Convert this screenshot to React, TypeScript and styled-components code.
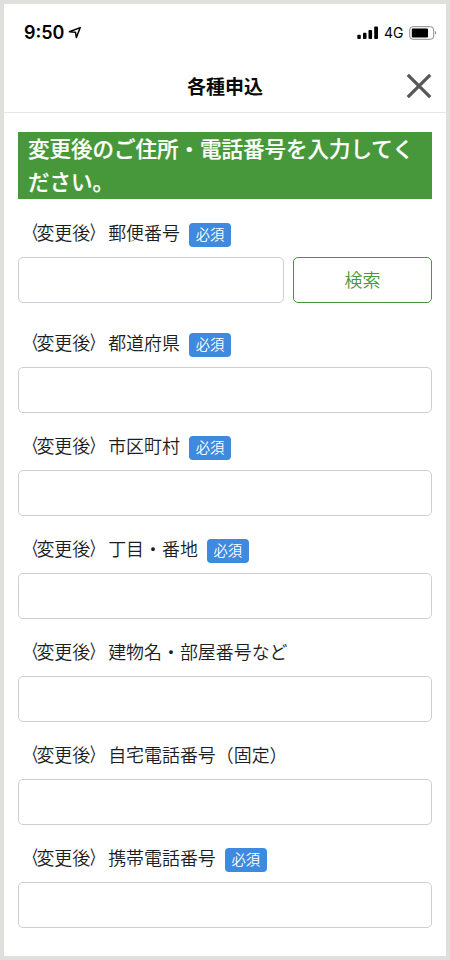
import React from "react";
import styled, { createGlobalStyle } from "styled-components";

const GlobalStyle = createGlobalStyle`
  * { box-sizing: border-box; }
  html, body { margin: 0; padding: 0; }
  body { font-family: "Noto Sans CJK JP", sans-serif; color: #1c1d22; }
`;

const Screen = styled.div`
  width: 450px;
  height: 960px;
  border: 4px solid #dfdfdd;
  background: #fff;
  overflow: hidden;
`;

const StatusBar = styled.div`
  display: flex;
  align-items: center;
  justify-content: space-between;
  height: 57px;
  padding: 0 8px 0 20px;
  color: #000;
  font-family: Inter, sans-serif;
`;

const StatusGroup = styled.div`
  display: flex;
  align-items: center;
`;

const Clock = styled.span`
  width: 43.5px;
  font-size: 18px;
  font-weight: 600;
  line-height: 22px;
  white-space: nowrap;
`;

const Network = styled.span`
  width: 27px;
  padding: 1px 0 0 5px;
  margin-right: 3px;
  font-size: 14px;
  line-height: 18px;
`;

const Header = styled.header`
  display: grid;
  grid-template-columns: 40px 1fr 40px;
  align-items: center;
  height: 52px;
  padding-bottom: 2px;
  border-bottom: 1px solid #e6e6e6;
`;

const Title = styled.h1`
  grid-column: 2;
  margin: 0;
  color: #0b0b0b;
  font-size: 19px;
  font-weight: 700;
  line-height: 28px;
  text-align: center;
`;

const CloseButton = styled.button`
  display: flex;
  width: 26px;
  padding: 0;
  border: 0;
  background: none;
`;

const Form = styled.main`
  padding: 19px 14px 0;
`;

const Banner = styled.div`
  display: flex;
  margin: 0 0 24px;
  padding-left: 10px;
  height: 67px;
  background: #47983a;
`;

const BannerText = styled.p`
  margin: -1px 0 0;
  color: #fff;
  font-size: 21.5px;
  font-weight: 500;
  -webkit-text-stroke: 0.2px #fff;
  line-height: 33px;
`;

const Field = styled.div<{ $gap?: number }>`
  height: 80px;
  margin-bottom: ${(p) => p.$gap ?? 23.1}px;
`;

const LabelRow = styled.div`
  display: flex;
  height: 24px;
  margin-bottom: 10px;
  gap: 9px;
`;

const Label = styled.label`
  padding-left: 0.5px;
  font-size: 17.95px;
  font-weight: 350;
  line-height: 19.6px;
  white-space: nowrap;
`;

const Bracket = styled.span<{ $side: "left" | "right" }>`
  display: inline-block;
  font-weight: 500;
  transform: ${(p) => (p.$side === "left" ? "translateX(1px)" : "translateX(0)")} scale(0.66, 1.06);
  transform-origin: ${(p) => (p.$side === "left" ? "right" : "left")} center;
`;

const Required = styled.span`
  width: 42px;
  height: 23.5px;
  border-radius: 4px;
  background: #3d8ade;
  color: #fff;
  font-size: 14.3px;
  font-weight: 350;
  line-height: 21.5px;
  text-align: center;
`;

const Controls = styled.div`
  display: flex;
  gap: 9px;
`;

const Input = styled.input`
  flex: 1;
  min-width: 0;
  height: 45.5px;
  padding: 0 12px;
  border: 1px solid #ceced4;
  border-radius: 5px;
  background: #fff;
  font: inherit;
  outline: none;
`;

const SearchButton = styled.button`
  width: 139px;
  height: 45.5px;
  padding: 0 0 2px;
  border: 1px solid #47983a;
  border-radius: 5px;
  background: #fff;
  color: #47983a;
  font-family: inherit;
  font-size: 18px;
  font-weight: 350;
  line-height: 40px;
`;

type FieldSpec = { id: string; name: string; required?: boolean; search?: boolean; gap?: number };

const fields: FieldSpec[] = [
  { id: "zip", name: "郵便番号", required: true, search: true, gap: 30 },
  { id: "prefecture", name: "都道府県", required: true },
  { id: "city", name: "市区町村", required: true },
  { id: "street", name: "丁目・番地", required: true },
  { id: "building", name: "建物名・部屋番号など" },
  { id: "home-phone", name: "自宅電話番号（固定）" },
  { id: "mobile-phone", name: "携帯電話番号", required: true },
];

const LocationIcon = () => (
  <svg width="14" height="14" viewBox="0 0 14 14" fill="none" stroke="#000" strokeWidth="1.5" strokeLinejoin="round">
    <path d="M1.4 5.8 12.2 1.6 8.4 11.6 7.4 6.2Z" />
  </svg>
);

const SignalIcon = () => (
  <svg width="22" height="14" viewBox="0 0 22 14" fill="#000">
    <rect x="0.3" y="8.8" width="3.5" height="4.2" rx="0.9" />
    <rect x="6" y="6.8" width="3.5" height="6.2" rx="0.9" />
    <rect x="11.5" y="3.9" width="3.6" height="9.1" rx="0.9" />
    <rect x="17.2" y="0.5" width="3.8" height="12.5" rx="0.9" />
  </svg>
);

const BatteryIcon = () => (
  <svg width="29" height="14" viewBox="0 0 29 14">
    <rect x="0.7" y="0.7" width="24" height="12.6" rx="3.2" fill="none" stroke="#8c8c8c" />
    <rect x="2.8" y="2.6" width="16.2" height="8.8" rx="1" fill="#000" />
    <path d="M26.2 4.8Q28.2 6.8 26.2 8.8Z" fill="#777" />
  </svg>
);

const CloseIcon = () => (
  <svg width="26" height="26" viewBox="0 0 26 26" stroke="#58585a" strokeWidth="3.3">
    <path d="M1.8 1.8 24.2 24.2M24.2 1.8 1.8 24.2" />
  </svg>
);

export default function App() {
  return (
    <>
      <GlobalStyle />
      <Screen>
        <StatusBar>
          <StatusGroup>
            <Clock>9:50</Clock>
            <LocationIcon />
          </StatusGroup>
          <StatusGroup>
            <SignalIcon />
            <Network>4G</Network>
            <BatteryIcon />
          </StatusGroup>
        </StatusBar>
        <Header>
          <Title>各種申込</Title>
          <CloseButton aria-label="閉じる">
            <CloseIcon />
          </CloseButton>
        </Header>
        <Form>
          <Banner>
            <BannerText>変更後のご住所・電話番号を入力してください。</BannerText>
          </Banner>
          {fields.map((f) => (
            <Field key={f.id} $gap={f.gap}>
              <LabelRow>
                <Label htmlFor={f.id}>
                  <Bracket $side="left">〈</Bracket>変更後<Bracket $side="right">〉</Bracket>
                  {f.name}
                </Label>
                {f.required && <Required>必須</Required>}
              </LabelRow>
              <Controls>
                <Input id={f.id} />
                {f.search && <SearchButton>検索</SearchButton>}
              </Controls>
            </Field>
          ))}
        </Form>
      </Screen>
    </>
  );
}
